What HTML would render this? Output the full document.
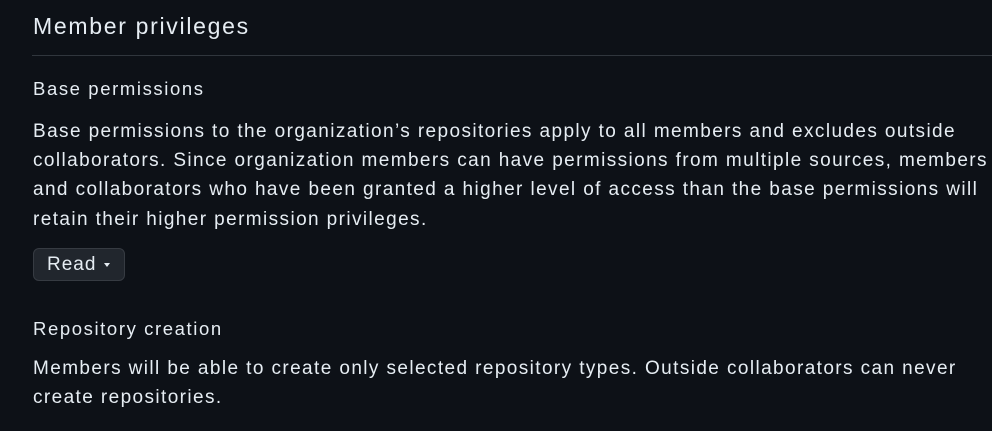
<!DOCTYPE html>
<html><head><style>
html,body{margin:0;padding:0;background:#0d1117;width:992px;height:431px;overflow:hidden}
body{font-family:"Liberation Sans",sans-serif;color:#e6edf3;position:relative}
.t{position:absolute;left:33px;white-space:nowrap;font-size:19px;letter-spacing:1.4px}
.l{font-size:18.5px;letter-spacing:1.6px}
h2{position:absolute;left:33px;top:13px;margin:0;font-weight:400;font-size:23px;letter-spacing:1.7px;white-space:nowrap}
.hr{position:absolute;left:32px;right:0;top:55px;height:1px;background:#30363d}
.btn{position:absolute;left:33px;top:248px;width:92px;height:33px;box-sizing:border-box;background:#21262d;border:1px solid #363b42;border-radius:6px;font-size:19px;letter-spacing:1px;line-height:31px;padding-left:13px}
.car{display:inline-block;border-left:3.5px solid transparent;border-right:3.5px solid transparent;border-top:4px solid #e6edf3;vertical-align:middle;margin-left:8px}
</style></head><body>
<h2>Member privileges</h2>
<div class="hr"></div>
<div class="t l" style="top:78px">Base permissions</div>
<div class="t" style="top:121px">Base permissions to the organization’s repositories apply to all members and excludes outside</div>
<div class="t" style="top:150px">collaborators. Since organization members can have permissions from multiple sources, members</div>
<div class="t" style="top:179px">and collaborators who have been granted a higher level of access than the base permissions will</div>
<div class="t" style="top:209px">retain their higher permission privileges.</div>
<div class="btn">Read<span class="car"></span></div>
<div class="t l" style="top:318px">Repository creation</div>
<div class="t" style="top:358px">Members will be able to create only selected repository types. Outside collaborators can never</div>
<div class="t" style="top:387px">create repositories.</div>
</body></html>
